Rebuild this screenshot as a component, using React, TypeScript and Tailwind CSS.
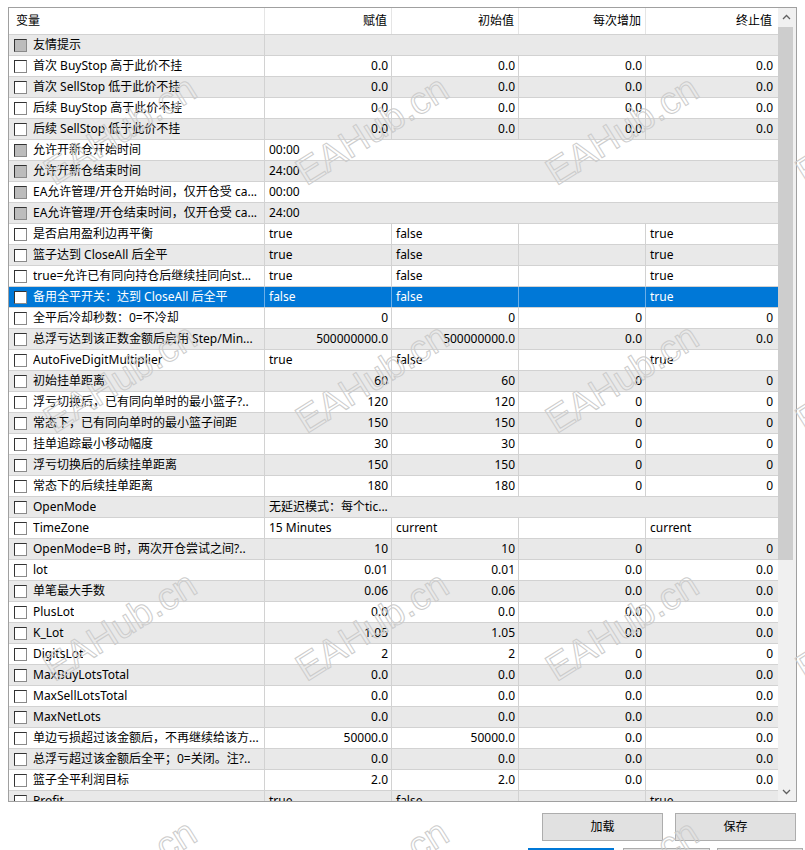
import React from "react";

type Kind = "group" | "span" | "num" | "text";

interface Param {
  name: string;
  kind: Kind;
  values?: string[];
  locked?: boolean;
}

const SELECTED = 12;

const zero4 = ["0.0", "0.0", "0.0", "0.0"];
const boolRow = ["true", "false", "", "true"];

const params: Param[] = [
  { name: "友情提示", kind: "group", locked: true },
  { name: "首次 BuyStop 高于此价不挂", kind: "num", values: zero4 },
  { name: "首次 SellStop 低于此价不挂", kind: "num", values: zero4 },
  { name: "后续 BuyStop 高于此价不挂", kind: "num", values: zero4 },
  { name: "后续 SellStop 低于此价不挂", kind: "num", values: zero4 },
  { name: "允许开新仓开始时间", kind: "span", values: ["00:00"], locked: true },
  { name: "允许开新仓结束时间", kind: "span", values: ["24:00"], locked: true },
  { name: "EA允许管理/开仓开始时间，仅开仓受 ca...", kind: "span", values: ["00:00"], locked: true },
  { name: "EA允许管理/开仓结束时间，仅开仓受 ca...", kind: "span", values: ["24:00"], locked: true },
  { name: "是否启用盈利边再平衡", kind: "text", values: boolRow },
  { name: "篮子达到 CloseAll 后全平", kind: "text", values: boolRow },
  { name: "true=允许已有同向持仓后继续挂同向st...", kind: "text", values: boolRow },
  { name: "备用全平开关：达到 CloseAll 后全平", kind: "text", values: ["false", "false", "", "true"] },
  { name: "全平后冷却秒数：0=不冷却", kind: "num", values: ["0", "0", "0", "0"] },
  { name: "总浮亏达到该正数金额后启用 Step/Min...", kind: "num", values: ["500000000.0", "500000000.0", "0.0", "0.0"] },
  { name: "AutoFiveDigitMultiplier", kind: "text", values: boolRow },
  { name: "初始挂单距离", kind: "num", values: ["60", "60", "0", "0"] },
  { name: "浮亏切换后，已有同向单时的最小篮子?..", kind: "num", values: ["120", "120", "0", "0"] },
  { name: "常态下，已有同向单时的最小篮子间距", kind: "num", values: ["150", "150", "0", "0"] },
  { name: "挂单追踪最小移动幅度", kind: "num", values: ["30", "30", "0", "0"] },
  { name: "浮亏切换后的后续挂单距离", kind: "num", values: ["150", "150", "0", "0"] },
  { name: "常态下的后续挂单距离", kind: "num", values: ["180", "180", "0", "0"] },
  { name: "OpenMode", kind: "span", values: ["无延迟模式：每个tic..."] },
  { name: "TimeZone", kind: "text", values: ["15 Minutes", "current", "", "current"] },
  { name: "OpenMode=B 时，两次开仓尝试之间?..", kind: "num", values: ["10", "10", "0", "0"] },
  { name: "lot", kind: "num", values: ["0.01", "0.01", "0.0", "0.0"] },
  { name: "单笔最大手数", kind: "num", values: ["0.06", "0.06", "0.0", "0.0"] },
  { name: "PlusLot", kind: "num", values: zero4 },
  { name: "K_Lot", kind: "num", values: ["1.05", "1.05", "0.0", "0.0"] },
  { name: "DigitsLot", kind: "num", values: ["2", "2", "0", "0"] },
  { name: "MaxBuyLotsTotal", kind: "num", values: zero4 },
  { name: "MaxSellLotsTotal", kind: "num", values: zero4 },
  { name: "MaxNetLots", kind: "num", values: zero4 },
  { name: "单边亏损超过该金额后，不再继续给该方...", kind: "num", values: ["50000.0", "50000.0", "0.0", "0.0"] },
  { name: "总浮亏超过该金额后全平；0=关闭。注?..", kind: "num", values: zero4 },
  { name: "篮子全平利润目标", kind: "num", values: ["2.0", "2.0", "0.0", "0.0"] },
  { name: "Profit", kind: "text", values: boolRow },
];

// watermark tiles, drawn over the whole window
const marks = [
  "left-[120px] top-[130px]",
  "left-[372px] top-[130px]",
  "left-[622px] top-[130px]",
  "left-[872px] top-[130px]",
  "left-[120px] top-[378px]",
  "left-[372px] top-[378px]",
  "left-[622px] top-[378px]",
  "left-[872px] top-[378px]",
  "left-[120px] top-[626px]",
  "left-[372px] top-[626px]",
  "left-[622px] top-[626px]",
  "left-[872px] top-[626px]",
  "left-[120px] top-[874px]",
  "left-[372px] top-[874px]",
  "left-[622px] top-[874px]",
];

function Checkbox({ locked }: { locked?: boolean }) {
  return (
    <span
      className={`block h-[13px] w-[13px] shrink-0 border border-t-[#333] border-l-[#333] border-r-[#8a8a8a] border-b-[#8a8a8a] ${
        locked ? "bg-[#bcbcbc]" : "bg-white"
      }`}
    />
  );
}

function ParamRow({ p, index }: { p: Param; index: number }) {
  const selected = index === SELECTED;
  const rowBg = selected
    ? "bg-[#0078d7] text-white"
    : index % 2 === 0
    ? "bg-[#e9e9e9] text-black"
    : "bg-white text-black";
  const line = selected ? "border-[#6aaee8]" : "border-[#d2d2d2]";
  const vals = p.values ?? [];

  return (
    <div className={`flex h-[21px] shrink-0 border-b border-[#d2d2d2] ${rowBg}`}>
      <div className={`flex w-[256px] shrink-0 items-center border-r pl-[5px] ${line}`}>
        <Checkbox locked={p.locked} />
        <span className="ml-[6px] overflow-hidden whitespace-nowrap leading-[20px]">{p.name}</span>
      </div>
      {p.kind === "span" && (
        <div className="flex flex-1 items-center pl-[4px] whitespace-nowrap">{vals[0]}</div>
      )}
      {(p.kind === "num" || p.kind === "text") && (
        <>
          {vals.slice(0, 3).map((v, i) => (
            <div
              key={i}
              className={`flex w-[127px] shrink-0 items-center border-r whitespace-nowrap ${line} ${
                p.kind === "num" ? "justify-end pr-[3px]" : "pl-[4px]"
              }`}
            >
              {v}
            </div>
          ))}
          <div
            className={`flex flex-1 items-center whitespace-nowrap ${
              p.kind === "num" ? "justify-end pr-[5px]" : "pl-[4px]"
            }`}
          >
            {vals[3]}
          </div>
        </>
      )}
    </div>
  );
}

function Chevron({ up }: { up?: boolean }) {
  return (
    <svg width="9" height="6" viewBox="0 0 9 6" className="block">
      <polyline
        points={up ? "1,5 4.5,1.5 8,5" : "1,1 4.5,4.5 8,1"}
        fill="none"
        stroke="#606060"
        strokeWidth="1.3"
      />
    </svg>
  );
}

export default function App() {
  return (
    <div className="relative h-[850px] w-[805px] overflow-hidden bg-white pt-[7px] font-['Noto_Sans','Noto_Sans_CJK_SC',sans-serif] text-[12px] leading-none text-black">
      <div className="ml-[8px] flex h-[795px] w-[789px] border border-[#a0a0a0]">
        <div className="flex w-[769px] flex-col overflow-hidden">
          <div className="flex h-[27px] shrink-0 border-b border-[#d2d2d2] bg-white">
            <div className="flex w-[256px] shrink-0 items-center border-r border-[#e5e5e5] pl-[7px]">变量</div>
            <div className="flex w-[127px] shrink-0 items-center justify-end border-r border-[#e5e5e5] pr-[4px]">赋值</div>
            <div className="flex w-[127px] shrink-0 items-center justify-end border-r border-[#e5e5e5] pr-[4px]">初始值</div>
            <div className="flex w-[127px] shrink-0 items-center justify-end border-r border-[#e5e5e5] pr-[4px]">每次增加</div>
            <div className="flex flex-1 items-center justify-end pr-[6px]">终止值</div>
          </div>
          {params.map((p, i) => (
            <ParamRow key={i} p={p} index={i} />
          ))}
        </div>

        <div className="flex w-[18px] flex-col bg-[#f0f0f0]">
          <div className="flex h-[18px] shrink-0 items-center justify-center pr-[2px]">
            <Chevron up />
          </div>
          <div className="mt-[1px] h-[533px] w-[15px] bg-[#cdcdcd]" />
          <div className="flex-1" />
          <div className="flex h-[18px] shrink-0 items-center justify-center pr-[2px]">
            <Chevron />
          </div>
        </div>
      </div>

      <div className="mt-[11px] flex justify-end gap-[12px] pr-[9px]">
        <button className="h-[28px] w-[121px] border border-[#adadad] bg-[#e1e1e1]">加载</button>
        <button className="h-[28px] w-[121px] border border-[#adadad] bg-[#e1e1e1]">保存</button>
      </div>

      <div className="mt-[7px] flex pl-[528px]">
        <div className="h-[30px] w-[86px] border-2 border-[#0078d7] bg-[#e1e1e1]" />
        <div className="ml-[9px] h-[30px] w-[87px] border border-[#adadad] bg-[#e1e1e1]" />
        <div className="ml-[7px] h-[30px] w-[86px] border border-[#adadad] bg-[#e1e1e1]" />
      </div>

      <div className="pointer-events-none absolute inset-0">
        {marks.map((pos, i) => (
          <span
            key={i}
            className={`absolute -translate-x-1/2 -translate-y-1/2 rotate-[-32deg] whitespace-nowrap font-['Liberation_Sans',sans-serif] text-[38px] leading-none text-transparent [-webkit-text-stroke:1px_#cccccc] ${pos}`}
          >
            EAHub.cn
          </span>
        ))}
      </div>
    </div>
  );
}
